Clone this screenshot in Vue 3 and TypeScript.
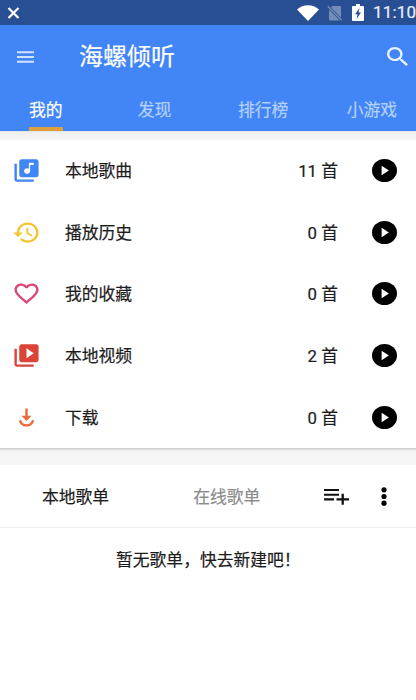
<script setup lang="ts">
interface Tab {
  label: string
  active: boolean
}

interface LibraryRow {
  icon: 'music' | 'history' | 'heart' | 'video' | 'download'
  label: string
  count: number
}

const tabs: Tab[] = [
  { label: '我的', active: true },
  { label: '发现', active: false },
  { label: '排行榜', active: false },
  { label: '小游戏', active: false },
]

const rows: LibraryRow[] = [
  { icon: 'music', label: '本地歌曲', count: 11 },
  { icon: 'history', label: '播放历史', count: 0 },
  { icon: 'heart', label: '我的收藏', count: 0 },
  { icon: 'video', label: '本地视频', count: 2 },
  { icon: 'download', label: '下载', count: 0 },
]

const iconPaths: Record<LibraryRow['icon'], string> = {
  music:
    'M20 2H8c-1.100 0-2 .9-2 2v12c0 1.100.9 2 2 2h12c1.100 0 2-.9 2-2V4c0-1.100-.9-2-2-2zm-2 5h-3v5.500c0 1.380-1.120 2.500-2.500 2.500S10 13.880 10 12.500s1.120-2.500 2.500-2.500c.570 0 1.080.190 1.500.510V5h4v2zM4 6H2v14c0 1.100.9 2 2 2h14v-2H4V6z',
  history:
    'M13 3c-4.970 0-9 4.030-9 9H1l3.890 3.890.070.140L9 12H6c0-3.870 3.130-7 7-7s7 3.130 7 7-3.130 7-7 7c-1.930 0-3.680-.790-4.940-2.060l-1.420 1.420C8.270 19.990 10.510 21 13 21c4.970 0 9-4.030 9-9s-4.030-9-9-9zm-1 5v5l4.280 2.540.720-1.210-3.500-2.080V8H12z',
  heart:
    'M16.500 3c-1.740 0-3.410.810-4.500 2.090C10.910 3.810 9.240 3 7.500 3 4.420 3 2 5.420 2 8.500c0 3.780 3.400 6.860 8.550 11.540L12 21.350l1.450-1.320C18.600 15.360 22 12.280 22 8.500 22 5.420 19.580 3 16.500 3zm-4.400 15.550l-.1.100-.1-.1C7.140 14.240 4 11.390 4 8.500 4 6.500 5.500 5 7.500 5c1.540 0 3.040.990 3.570 2.360h1.870C13.460 5.990 14.960 5 16.500 5c2 0 3.500 1.500 3.500 3.500 0 2.890-3.140 5.740-7.900 10.050z',
  video:
    'M4 6H2v14c0 1.100.9 2 2 2h14v-2H4V6zm16-4H8c-1.100 0-2 .9-2 2v12c0 1.100.9 2 2 2h12c1.100 0 2-.9 2-2V4c0-1.100-.9-2-2-2zm-8 12.500v-9l6 4.500-6 4.500z',
  download:
    'M11 4h2v6.500h3.200L12 15.200l-4.200-4.700H11zM5.700 14.800l1.700-.9c.7 2.700 2.300 4 4.600 4s3.900-1.300 4.600-4l1.700.9c-.8 3.400-3.100 5.200-6.300 5.200s-5.500-1.800-6.300-5.200z',
}
</script>

<template>
  <div class="screen">
    <header class="top">
      <div class="status">
        <svg class="close" viewBox="0 0 12 12"><path d="M1 1l10 10M11 1L1 11" /></svg>
        <div class="indicators">
          <svg class="wifi" viewBox="0 0 22 16"><path d="M0 4.500C6-1.200 16-1.200 22 4.500L11 16z" /></svg>
          <svg class="sim" viewBox="0 0 16 16">
            <path d="M5.500 1H13a1 1 0 0 1 1 1v10.500L4 2.500zM2 4.600L13 15.500H3a1 1 0 0 1-1-1z" />
            <path class="slash" d="M.8 1.200l14 14" />
          </svg>
          <svg class="battery" viewBox="0 0 12 17">
            <path fill-rule="evenodd" d="M4 0h4v2h3a1 1 0 0 1 1 1v13a1 1 0 0 1-1 1H1a1 1 0 0 1-1-1V3a1 1 0 0 1 1-1h3zM7.500 4L3 10.200h2.500L4.600 15 9 8.600H6.600z" />
          </svg>
          <span class="clock">11:10</span>
        </div>
      </div>

      <div class="bar">
        <svg class="menu" viewBox="0 0 17 12"><path d="M0 1.200h17M0 6h17M0 10.800h17" /></svg>
        <h1 class="title">海螺倾听</h1>
        <svg class="search" viewBox="3 3 17.500 17.500" preserveAspectRatio="none">
          <path d="M15.500 14h-.790l-.280-.270C15.410 12.590 16 11.110 16 9.500 16 5.910 13.090 3 9.500 3S3 5.910 3 9.500 5.910 16 9.500 16c1.610 0 3.090-.590 4.230-1.570l.270.280v.790l5 4.990L20.490 19l-4.990-5zm-6 0C7.010 14 5 11.990 5 9.500S7.010 5 9.500 5 14 7.010 14 9.500 11.990 14 9.500 14z" />
        </svg>
      </div>

      <nav class="tabs">
        <div v-for="tab in tabs" :key="tab.label" class="tab" :class="{ active: tab.active }">
          <span>{{ tab.label }}</span>
        </div>
      </nav>
    </header>

    <main>
      <ul class="library">
        <li v-for="row in rows" :key="row.label" class="row">
          <svg class="icon" :class="row.icon" viewBox="0 0 24 24" preserveAspectRatio="none">
            <path :d="iconPaths[row.icon]" />
          </svg>
          <span class="label">{{ row.label }}</span>
          <span class="count">{{ row.count }} 首</span>
          <svg class="play" viewBox="0 0 20 20" preserveAspectRatio="none">
            <circle cx="10" cy="10" r="10" />
            <path d="M7.700 5.900v8.200L13.500 10z" />
          </svg>
        </li>
      </ul>

      <section class="playlists">
        <div class="playlist-bar">
          <span class="playlist-tab selected">本地歌单</span>
          <span class="playlist-tab">在线歌单</span>
          <svg class="add" viewBox="0 0 25 17">
            <path class="lines" d="M0 2h15M0 6.700h15M0 11.400h10" />
            <path class="plus" d="M12.500 11.400H25M18.700 5.800v11" />
          </svg>
          <svg class="more" viewBox="0 0 6 19">
            <circle cx="3" cy="2.800" r="2.600" />
            <circle cx="3" cy="9.500" r="2.600" />
            <circle cx="3" cy="16.200" r="2.600" />
          </svg>
        </div>
        <p class="empty">暂无歌单，快去新建吧！</p>
      </section>
    </main>
  </div>
</template>

<style>
body {
  margin: 0;
  background: #fff;
}
</style>

<style scoped>
.screen {
  width: 416px;
  height: 700px;
  overflow: hidden;
  background: #fff;
  color: #1c1c1c;
  font-family: Roboto, 'Noto Sans CJK SC', sans-serif;
  font-size: 16.8px;
  -webkit-text-stroke: 0.2px currentColor;
}

svg {
  display: block;
  flex: none;
}

.top {
  height: 131px;
  background: #4285f6;
  color: #fff;
}

.status {
  display: flex;
  align-items: center;
  justify-content: space-between;
  box-sizing: border-box;
  height: 25px;
  padding-left: 7px;
  background: #284f93;
}

.close {
  width: 13px;
  height: 12px;
  fill: none;
  stroke: #fff;
  stroke-width: 2.2;
}

.indicators {
  display: flex;
  align-items: center;
  height: 25px;
}

.indicators svg {
  fill: #fff;
}

.wifi {
  width: 22px;
  height: 16px;
  margin-right: 8px;
}

.sim {
  width: 16px;
  height: 16px;
  margin-right: 9px;
  opacity: 0.35;
}

.sim .slash {
  stroke: #fff;
  stroke-width: 1.4;
}

.battery {
  width: 12px;
  height: 17px;
  margin-right: 9px;
}

.clock {
  width: 43px;
  color: #eaf0fa;
  font-size: 17px;
  line-height: 25px;
  letter-spacing: 0.2px;
  white-space: nowrap;
}

.bar {
  display: flex;
  align-items: center;
  height: 62px;
  padding: 0 8px 0 17px;
}

.menu {
  width: 17px;
  height: 12px;
  margin-top: 1px;
  fill: none;
  stroke: #d3e3fd;
  stroke-width: 1.9;
}

.title {
  flex: 1;
  margin: 0 0 0 45px;
  padding-top: 2px;
  font-size: 24px;
  font-weight: 400;
  line-height: 36px;
}

.search {
  width: 21px;
  height: 19px;
  fill: #e8f1ff;
}

.tabs {
  display: grid;
  grid-template-columns: repeat(4, 108.700px);
  width: 416px;
  height: 44px;
  margin-left: -8.500px;
}

.tab {
  display: flex;
  justify-content: center;
  color: #b5d1fc;
}

.tab span {
  box-sizing: border-box;
  height: 44px;
  line-height: 46px;
}

.tab.active {
  color: #fff;
}

.tab.active span {
  border-bottom: 4px solid #dfa03b;
}

.library {
  box-sizing: border-box;
  height: 317px;
  margin: 0;
  padding: 8px 0 0;
  list-style: none;
  background: linear-gradient(#dfe3ea, #f1f1f1 2px, #f3f3f3 8px, #fff 10px);
}

.row {
  display: flex;
  align-items: center;
  height: 61.800px;
  padding: 0 19px 0 12px;
}

.icon {
  width: 29px;
  height: 27px;
  margin-top: 1px;
}

.music {
  fill: #4285f4;
}

.history {
  fill: #f5c431;
}

.heart {
  fill: #d94678;
}

.video {
  fill: #dc4439;
}

.download {
  fill: #f0693a;
}

.label {
  flex: 1;
  margin-left: 24px;
  padding-top: 2px;
  line-height: 26px;
}

.count {
  margin-right: 34px;
  padding-top: 2px;
  line-height: 26px;
}

.play {
  width: 25px;
  height: 23px;
  margin-top: 1px;
  fill: #000;
}

.play path {
  fill: #fff;
}

.playlists {
  border-top: 17px solid #f5f5f5;
  position: relative;
}

.playlists::before {
  content: '';
  position: absolute;
  inset: -17px 0 auto;
  height: 3px;
  background: linear-gradient(#c9c9c9, #f5f5f5);
}

.playlist-bar {
  display: flex;
  align-items: center;
  box-sizing: border-box;
  height: 63px;
  padding: 0 29px 0 42px;
  border-bottom: 1px solid #eee;
}

.playlist-tab {
  color: #8b8b8b;
}

.selected {
  margin-right: 84px;
  color: #1c1c1c;
}

.add {
  width: 25px;
  height: 17px;
  margin: 0 32px 0 auto;
  fill: none;
  stroke: #111;
}

.lines {
  stroke-width: 2.1;
}

.plus {
  stroke-width: 2.3;
}

.more {
  width: 6px;
  height: 19px;
  fill: #000;
}

.empty {
  margin: 0 0 0 116px;
  line-height: 64px;
  white-space: nowrap;
}
</style>
